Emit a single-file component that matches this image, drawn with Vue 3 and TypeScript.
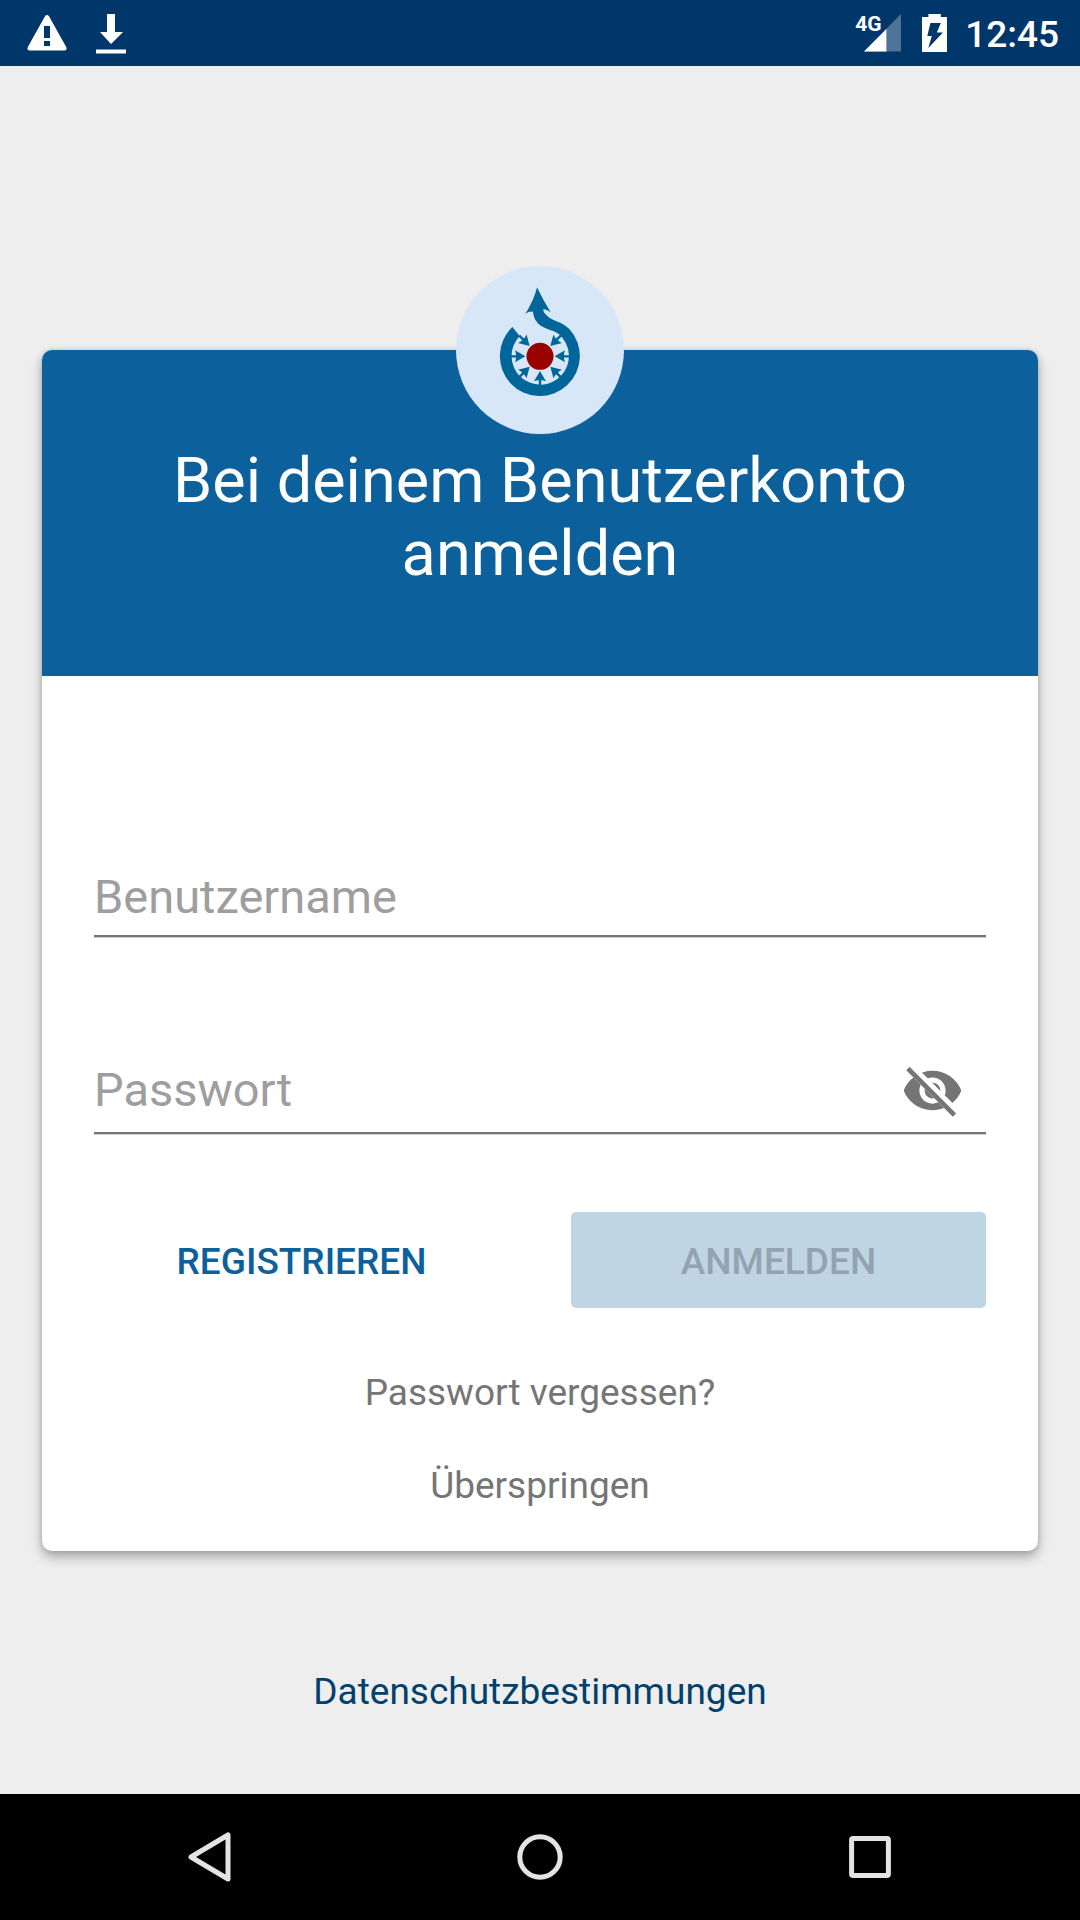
<script setup lang="ts">
import { computed, ref } from 'vue'

const username = ref('')
const password = ref('')
const passwordVisible = ref(false)

const canSubmit = computed(() => username.value !== '' && password.value !== '')
const arrowAngles: number[] = [0, 45, 90, 135, 225, 270, 315]
</script>

<template>
  <div class="screen">
    <header class="status-bar">
      <div class="status-group notifications">
        <svg class="icon-warning" viewBox="0 0 40 36" aria-hidden="true">
          <path
            fill="#fff"
            fill-rule="evenodd"
            d="M18 1.2Q20 -1 22 1.2L39.2 32Q40.4 35.4 37.6 35.6H2.4Q-.4 35.4 .8 32ZM17 11V23H23V11ZM17 26V31H23V26Z"
          />
        </svg>
        <svg class="icon-download" viewBox="0 -2 30 42" aria-hidden="true">
          <path fill="#fff" d="M11 0H19V18H27L15 30 4 18H11ZM0 35.4H30V39.6H0Z" />
        </svg>
      </div>
      <div class="status-group">
        <div class="signal">
          <svg viewBox="0 0 46 38" aria-hidden="true">
            <path fill="#fff" fill-opacity=".3" d="M46 0V37.4H9Z" />
            <path fill="#fff" d="M31.4 15V37.4H9Z" />
          </svg>
          <span class="network">4G</span>
        </div>
        <svg class="icon-battery" viewBox="0 0 25 38" aria-hidden="true">
          <path
            fill="#fff"
            fill-rule="evenodd"
            d="M6.4 0H18.8V3H25V38H0V3H6.4ZM8.4 9 5.3 22H9.8L6.3 34 21 18.4H14.8L18.8 9Z"
          />
        </svg>
        <time class="clock">12:45</time>
      </div>
    </header>

    <main class="content">
      <section class="card">
        <div class="card-header">
          <svg class="logo" viewBox="48 48 504 504" role="img" aria-label="Wikimedia Commons">
            <circle cx="300" cy="300" r="252" fill="#d7e7f8" />
            <g fill="#069">
              <path
                d="M217 231A120 120 0 1 0 388 237C364 212 340 216 321 197C312 189 308 183 311 177Q320 178 332 187Q309 150 291 112Q283 148 256 192Q267 183 279 185C281 205 290 219 305 229C325 241 340 240 357 253A86 86 0 1 1 239 258Z"
              />
              <path
                v-for="angle in arrowAngles"
                :key="angle"
                :transform="`rotate(${angle} 300 319)`"
                d="M300 363L318 394Q311 391 303.500 391V407H296.500V391Q289 391 282 394Z"
              />
            </g>
            <circle cx="300" cy="319" r="40.500" fill="#900" />
          </svg>
          <h1 class="title">Bei deinem Benutzerkonto anmelden</h1>
        </div>

        <form class="form" @submit.prevent>
          <div class="field">
            <label v-show="username === ''" for="username">Benutzername</label>
            <input id="username" v-model="username" type="text" autocomplete="username" />
          </div>
          <div class="field">
            <label v-show="password === ''" for="password">Passwort</label>
            <input
              id="password"
              v-model="password"
              :type="passwordVisible ? 'text' : 'password'"
              autocomplete="current-password"
            />
            <button
              type="button"
              class="toggle"
              aria-label="Passwort anzeigen"
              :aria-pressed="passwordVisible"
              @click="passwordVisible = !passwordVisible"
            >
              <svg viewBox="0 0 24 24" aria-hidden="true">
                <clipPath id="eye-clip">
                  <path d="M2 4.270L19.730 22L22.270 19.460L4.540 1.730V1H23V23H1V4.270Z" />
                </clipPath>
                <path
                  fill="#757575"
                  :clip-path="passwordVisible ? undefined : 'url(#eye-clip)'"
                  d="M12 4.500C7 4.500 2.730 7.610 1 12c1.730 4.390 6 7.500 11 7.500s9.270-3.110 11-7.500c-1.730-4.390-6-7.500-11-7.500zM12 17c-2.760 0-5-2.240-5-5s2.240-5 5-5 5 2.240 5 5-2.240 5-5 5zM12 9c-1.660 0-3 1.340-3 3s1.340 3 3 3 3-1.340 3-3-1.340-3-3-3z"
                />
                <path
                  v-if="!passwordVisible"
                  d="M3.270 4.270L19.740 20.740"
                  stroke="#757575"
                  stroke-width="1.800"
                  stroke-linecap="square"
                />
              </svg>
            </button>
          </div>

          <div class="actions">
            <button type="button" class="button">REGISTRIEREN</button>
            <button type="submit" class="button primary" :disabled="!canSubmit">ANMELDEN</button>
          </div>

          <div class="links">
            <a href="#forgot">Passwort vergessen?</a>
            <a href="#skip">Überspringen</a>
          </div>
        </form>
      </section>

      <a class="privacy" href="#privacy">Datenschutzbestimmungen</a>
    </main>

    <nav class="nav-bar" aria-label="System">
      <button type="button" aria-label="Zurück">
        <svg viewBox="0 0 60 60" aria-hidden="true">
          <path d="M48 8V52L11 30Z" />
        </svg>
      </button>
      <button type="button" aria-label="Startbildschirm">
        <svg viewBox="0 0 60 60" aria-hidden="true">
          <circle cx="30" cy="30" r="20.200" />
        </svg>
      </button>
      <button type="button" aria-label="Übersicht">
        <svg viewBox="0 0 60 60" aria-hidden="true">
          <rect x="11.600" y="11.600" width="36.800" height="36.800" rx="1.500" />
        </svg>
      </button>
    </nav>
  </div>
</template>

<style>
body {
  margin: 0;
  background: #eee;
}
</style>

<style scoped>
.screen {
  display: flex;
  flex-direction: column;
  min-height: 100vh;
  background: #eee;
  font-family: Roboto, "Liberation Sans", sans-serif;
}

.screen * {
  box-sizing: border-box;
}

svg {
  display: block;
}

button {
  padding: 0;
  border: 0;
  background: none;
  font: inherit;
}

a {
  text-decoration: none;
}

.status-bar {
  display: flex;
  justify-content: space-between;
  align-items: center;
  height: 66px;
  padding: 0 21px 0 27px;
  background: #00376b;
  color: #fff;
}

.status-group {
  display: flex;
  align-items: center;
}

.notifications {
  gap: 29px;
}

.icon-warning {
  width: 40px;
  height: 36px;
}

.icon-download {
  width: 30px;
  height: 42px;
}

.signal {
  position: relative;
  margin-right: 21px;
}

.signal svg {
  width: 46px;
  height: 38px;
}

.network {
  position: absolute;
  top: 0;
  left: 0;
  font-size: 21px;
  font-weight: 700;
  line-height: 20px;
}

.icon-battery {
  width: 25px;
  height: 38px;
  margin-right: 18px;
}

.clock {
  padding-top: 3px;
  font-size: 37px;
  font-weight: 500;
  line-height: 44px;
}

.content {
  display: flex;
  flex: 1;
  flex-direction: column;
  padding: 284px 42px 80px;
}

.card {
  border-radius: 10px;
  background: #fff;
  box-shadow: 0 6px 12px rgba(0, 0, 0, 0.3), 0 0 5px rgba(0, 0, 0, 0.14);
}

.card-header {
  display: flex;
  flex-direction: column;
  align-items: center;
  padding: 0 105px 86px;
  border-radius: 10px 10px 0 0;
  background: #0c609c;
}

.logo {
  width: 168px;
  height: 168px;
  margin-top: -84px;
}

.title {
  margin: 10px 0 0;
  color: #fff;
  font-size: 63px;
  font-weight: 400;
  line-height: 73px;
  text-align: center;
}

.form {
  padding: 193px 52px 43px;
}

.field {
  position: relative;
  display: flex;
  align-items: center;
  padding-bottom: 10px;
  border-bottom: 2px solid #757575;
  box-shadow: 0 1px 0 #ccc;
}

.field + .field {
  margin-top: 122px;
}

.field label {
  position: absolute;
  bottom: 10px;
  left: 0;
  color: #9e9e9e;
  font-size: 47px;
  line-height: 56px;
  pointer-events: none;
}

.field + .field label {
  bottom: 14px;
}

.field input {
  flex: 1;
  min-width: 0;
  height: 56px;
  padding: 0;
  border: 0;
  outline: 0;
  background: none;
  color: #212121;
  font-family: inherit;
  font-size: 47px;
  line-height: 56px;
}

.toggle {
  width: 63px;
  height: 63px;
  margin-right: 22px;
}

.toggle svg {
  width: 63px;
  height: 63px;
}

.actions {
  display: grid;
  grid-template-columns: 1fr 1fr;
  gap: 62px;
  margin-top: 78px;
}

.button {
  height: 96px;
  padding-top: 3px;
  border-radius: 5px;
  color: #0c609c;
  font-size: 37px;
  font-weight: 500;
  line-height: 44px;
}

.button.primary {
  background: #0c609c;
  color: #fff;
}

.button.primary:disabled {
  background: #c0d5e4;
  color: #94a3b0;
}

.links {
  display: flex;
  flex-direction: column;
  align-items: center;
  gap: 49px;
  margin-top: 63px;
}

.links a {
  color: #757575;
  font-size: 37px;
  line-height: 44px;
}

.privacy {
  align-self: center;
  margin-top: 119px;
  color: #00406d;
  font-size: 37px;
  line-height: 44px;
}

.nav-bar {
  display: grid;
  grid-template-columns: repeat(3, 1fr);
  height: 126px;
  padding: 0 45px;
  background: #000;
}

.nav-bar button {
  display: flex;
  align-items: center;
  justify-content: center;
}

.nav-bar svg {
  width: 60px;
  height: 60px;
  fill: none;
  stroke: #e4e4e4;
  stroke-width: 5;
  stroke-linejoin: round;
}
</style>
